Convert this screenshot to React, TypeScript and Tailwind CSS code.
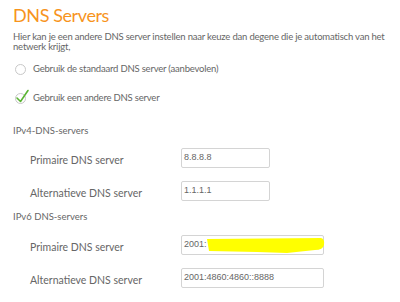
import React from "react";

function Field({ label, value, wide, redacted }: { label: string; value: string; wide?: boolean; redacted?: boolean }) {
  return (
    <div className="flex items-center h-[33px]">
      <div className="w-[168px] pl-[17px] pt-[7px] text-[10.5px] text-[#666]">{label}</div>
      <div className={`relative h-[20px] ${wide ? "w-[143px]" : "w-[89px]"} border border-[#d4d4d4] rounded-[2px] bg-white flex items-center px-[2px] text-[9px] text-[#666] font-['Liberation_Sans',sans-serif]`}>
        {value}
        {redacted && (
          <svg className="absolute left-[25px] top-[2px]" width="118" height="16" viewBox="0 0 118 16">
            <path d="M0 1 L114 0 Q118 1 117 7 Q116 12 108 12 L80 15 L50 14 L2 13 Z" fill="#ffff00" />
          </svg>
        )}
      </div>
    </div>
  );
}

export default function App() {
  return (
    <div className="w-[400px] h-[302px] bg-white overflow-hidden font-['Lato',sans-serif]">
      <div className="pl-[13px]">
        <h1 className="text-[18px] leading-[24px] pt-[3px] tracking-[-0.4px] text-[#f7941d]">DNS Servers</h1>
        <p className="mt-[5px] w-[378px] text-[9.5px] leading-[10px] tracking-[-0.2px] text-[#666]">
          Hier kan je een andere DNS server instellen naar keuze dan degene die je automatisch van het netwerk krijgt,
        </p>

        <div className="mt-[10px] flex items-center gap-[7px] pl-[2px] h-[14px]">
          <span className="w-[11px] h-[11px] rounded-full border border-[#c8c8c8]" />
          <span className="text-[9.5px] tracking-[-0.2px] text-[#666]">Gebruik de standaard DNS server (aanbevolen)</span>
        </div>
        <div className="mt-[15px] flex items-center gap-[7px] pl-[2px] h-[14px]">
          <span className="relative w-[11px] h-[11px] rounded-full border border-[#c8c8c8]">
            <svg className="absolute -left-[1px] -top-[5px]" width="15" height="15" viewBox="0 0 15 15">
              <path d="M2 9 L5.5 12.5 L13 1.5" fill="none" stroke="#5ab432" strokeWidth="1.6" strokeLinecap="round" strokeLinejoin="round" />
            </svg>
          </span>
          <span className="text-[9.5px] tracking-[-0.2px] text-[#666]">Gebruik een andere DNS server</span>
        </div>

        <div className="mt-[20px] text-[9.5px] text-[#666] leading-[12px]">IPv4-DNS-servers</div>
        <div className="mt-[4px]">
          <Field label="Primaire DNS server" value="8.8.8.8" />
          <Field label="Alternatieve DNS server" value="1.1.1.1" />
        </div>
        <div className="mt-[4px] text-[9.5px] text-[#666] leading-[12px]">IPv6 DNS-servers</div>
        <div className="mt-[5px]">
          <Field label="Primaire DNS server" value="2001:" wide redacted />
          <Field label="Alternatieve DNS server" value="2001:4860:4860::8888" wide />
        </div>
        <div className="mt-[11px] border-t border-[#e6e6e6]" />
      </div>
    </div>
  );
}
